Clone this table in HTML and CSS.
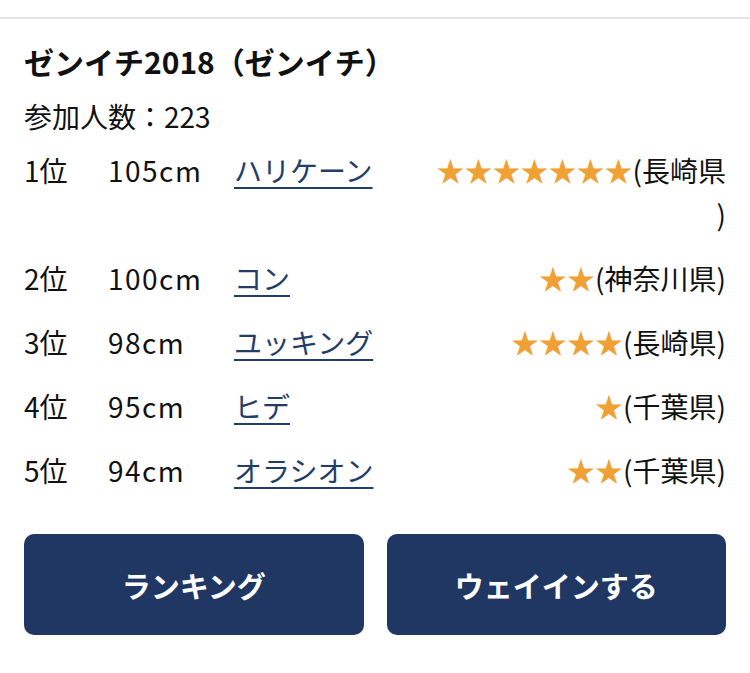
FILE: index.html
```html
<!DOCTYPE html>
<html lang="ja">
<head>
<meta charset="utf-8">
<link rel="stylesheet" href="styles.css">
</head>
<body>
<div class="topbar"></div>
<section class="event">
  <h2 class="title">ゼンイチ2018（ゼンイチ）</h2>
  <p class="count">参加人数：223</p>
  <div class="ranking">
    <div class="row">
      <span class="rank">1位</span>
      <span class="size">105cm</span>
      <span class="name"><a href="#">ハリケーン</a></span>
      <span class="pref"><span class="stars">★★★★★★★</span>(長崎県)</span>
    </div>
    <div class="row">
      <span class="rank">2位</span>
      <span class="size">100cm</span>
      <span class="name"><a href="#">コン</a></span>
      <span class="pref"><span class="stars">★★</span>(神奈川県)</span>
    </div>
    <div class="row">
      <span class="rank">3位</span>
      <span class="size">98cm</span>
      <span class="name"><a href="#">ユッキング</a></span>
      <span class="pref"><span class="stars">★★★★</span>(長崎県)</span>
    </div>
    <div class="row">
      <span class="rank">4位</span>
      <span class="size">95cm</span>
      <span class="name"><a href="#">ヒデ</a></span>
      <span class="pref"><span class="stars">★</span>(千葉県)</span>
    </div>
    <div class="row">
      <span class="rank">5位</span>
      <span class="size">94cm</span>
      <span class="name"><a href="#">オラシオン</a></span>
      <span class="pref"><span class="stars">★★</span>(千葉県)</span>
    </div>
  </div>
  <div class="actions">
    <a class="btn" href="#">ランキング</a>
    <a class="btn" href="#">ウェイインする</a>
  </div>
</section>
</body>
</html>
```
FILE: styles.css
```css
* { box-sizing: border-box; }
html, body {
  margin: 0;
  padding: 0;
  background: #fff;
}
body {
  font-family: "Noto Sans CJK JP", "Noto Sans", sans-serif;
  color: #111;
}
.topbar {
  height: 19px;
  border-bottom: 2px solid #e5e5e5;
}
.event {
  padding: 20px 24px 0;
}
.title {
  margin: 0;
  font-size: 30px;
  font-weight: 700;
  line-height: 44px;
}
.count {
  margin: 11px 0 0;
  font-size: 28px;
  line-height: 44px;
}
.ranking {
  margin-top: 10px;
  display: flex;
  flex-direction: column;
  gap: 20px;
}
.row {
  display: grid;
  grid-template-columns: 84px 126px 1fr 290px;
  font-size: 28px;
  line-height: 44px;
}
.size {
  letter-spacing: 1.5px;
}
.name a {
  color: #233d68;
  text-decoration: underline;
  text-underline-offset: 5px;
  text-decoration-thickness: 2px;
}
.pref {
  text-align: right;
  line-break: anywhere;
}
.stars {
  color: #f0a136;
}
.actions {
  margin-top: 42px;
  display: grid;
  grid-template-columns: 1fr 1fr;
  gap: 23px;
}
.btn {
  display: flex;
  align-items: center;
  justify-content: center;
  height: 101px;
  background: #1f3762;
  color: #fff;
  border-radius: 10px;
  font-size: 29px;
  font-weight: 700;
  text-decoration: none;
}
```
